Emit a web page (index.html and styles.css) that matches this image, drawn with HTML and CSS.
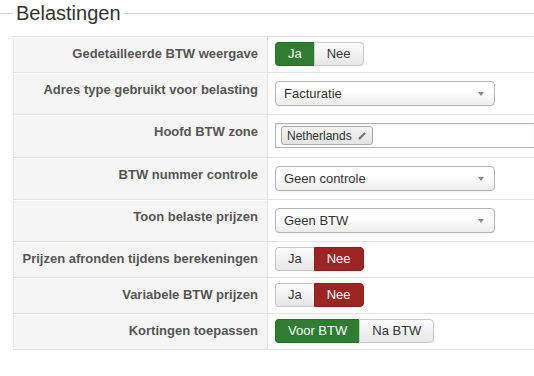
FILE: index.html
```html
<!DOCTYPE html>
<html lang="nl">
<head>
    <meta charset="UTF-8">
    <title>Belastingen</title>
    <link rel="stylesheet" href="styles.css">
</head>
<body>
    <fieldset class="settings">
        <legend>Belastingen</legend>

        <div class="settings-table">
            <div class="row">
                <div class="label">Gedetailleerde BTW weergave</div>
                <div class="control">
                    <div class="btn-group">
                        <span class="btn btn-yes">Ja</span>
                        <span class="btn">Nee</span>
                    </div>
                </div>
            </div>

            <div class="row">
                <div class="label">Adres type gebruikt voor belasting</div>
                <div class="control">
                    <div class="select">Facturatie<b class="arrow"></b></div>
                </div>
            </div>

            <div class="row">
                <div class="label">Hoofd BTW zone</div>
                <div class="control">
                    <div class="tag-input">
                        <span class="tag">Netherlands
                            <svg class="pencil" width="10" height="10" viewBox="0 0 10 10">
                                <path d="M7.2 1.2 L8.8 2.8 L3.4 8.2 L1.4 8.6 L1.8 6.6 Z" fill="#777"/>
                            </svg>
                        </span>
                    </div>
                </div>
            </div>

            <div class="row">
                <div class="label">BTW nummer controle</div>
                <div class="control">
                    <div class="select">Geen controle<b class="arrow"></b></div>
                </div>
            </div>

            <div class="row">
                <div class="label">Toon belaste prijzen</div>
                <div class="control">
                    <div class="select">Geen BTW<b class="arrow"></b></div>
                </div>
            </div>

            <div class="row">
                <div class="label">Prijzen afronden tijdens berekeningen</div>
                <div class="control">
                    <div class="btn-group">
                        <span class="btn">Ja</span>
                        <span class="btn btn-no">Nee</span>
                    </div>
                </div>
            </div>

            <div class="row">
                <div class="label">Variabele BTW prijzen</div>
                <div class="control">
                    <div class="btn-group">
                        <span class="btn">Ja</span>
                        <span class="btn btn-no">Nee</span>
                    </div>
                </div>
            </div>

            <div class="row">
                <div class="label">Kortingen toepassen</div>
                <div class="control">
                    <div class="btn-group">
                        <span class="btn btn-yes">Voor BTW</span>
                        <span class="btn">Na BTW</span>
                    </div>
                </div>
            </div>
        </div>
    </fieldset>
</body>
</html>
```

FILE: styles.css
```css
* {
    margin: 0;
    padding: 0;
    box-sizing: border-box;
}

body {
    font-family: "Liberation Sans", Arial, sans-serif;
    font-size: 13px;
    color: #333;
    background: #fff;
    overflow: hidden;
}

.settings {
    border: 0;
    border-top: 1px solid #d5d5d5;
    padding: 0 0 0 13px;
}

.settings legend {
    font-size: 20px;
    line-height: 26px;
    font-weight: normal;
    color: #333;
    padding: 0 3px;
}

.settings-table {
    margin-top: 10px;
    border-bottom: 1px solid #e3e3e3;
    box-shadow: 0 1px 2px rgba(0, 0, 0, 0.06);
}

.row {
    display: flex;
    border-top: 1px solid #e3e3e3;
}

.label {
    width: 255px;
    flex-shrink: 0;
    background: #f5f5f5;
    border-right: 1px solid #e3e3e3;
    box-shadow: inset 0 1px 0 #fff, inset 1px 0 1px rgba(0, 0, 0, 0.05);
    padding: 7px 9px 0 0;
    line-height: 20px;
    font-weight: bold;
    color: #555;
    text-align: right;
}

.control {
    flex: 1;
    min-width: 0;
    padding: 5px 0 6px 7px;
}

.btn-group {
    display: inline-flex;
}

.btn {
    height: 24px;
    line-height: 22px;
    padding: 0 12px;
    border: 1px solid #c8c8c8;
    background: linear-gradient(#fdfdfd, #e6e6e6);
    color: #333;
}

.btn:first-child {
    border-radius: 4px 0 0 4px;
    border-right: 0;
}

.btn:last-child {
    border-radius: 0 4px 4px 0;
}

.btn-yes {
    background: #2f7d32;
    border-color: #2a6f2c;
    color: #fff;
}

.btn-no {
    background: #9c2422;
    border-color: #8a1f1d;
    color: #fff;
}

.select {
    position: relative;
    width: 220px;
    height: 25px;
    margin: 3px 0 2px;
    line-height: 23px;
    padding: 0 8px;
    border: 1px solid #b5b5b5;
    border-radius: 4px;
    background: linear-gradient(#fff 40%, #ececec);
    box-shadow: 0 1px 1px rgba(0, 0, 0, 0.05);
}

.arrow {
    position: absolute;
    right: 10px;
    top: 10px;
    border-left: 3px solid transparent;
    border-right: 3px solid transparent;
    border-top: 4px solid #888;
}

/* runs on past the right edge of the window */
.tag-input {
    height: 25px;
    margin: 3px 0 3px;
    padding: 2px 5px;
    border: 1px solid #b5b5b5;
    border-right: 0;
    background: #fff;
    box-shadow: inset 0 1px 2px rgba(0, 0, 0, 0.08);
}

.tag {
    display: inline-flex;
    align-items: center;
    gap: 5px;
    height: 19px;
    padding: 0 5px;
    font-size: 12px;
    color: #333;
    border: 1px solid #aaa;
    border-radius: 3px;
    background: linear-gradient(#f4f4f4, #e4e4e4);
}
```
